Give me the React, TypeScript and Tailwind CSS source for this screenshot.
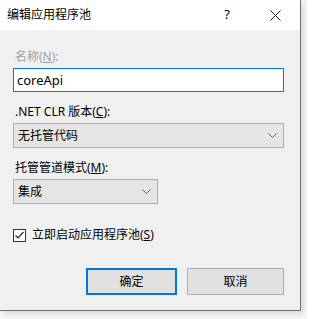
import React from "react";

const font = "font-['Noto_Sans','Noto_Sans_CJK_SC',sans-serif]";

function Chevron() {
  return (
    <svg width="9" height="6" viewBox="0 0 9 6" className="shrink-0">
      <path d="M0.5 0.5 L4.5 4.5 L8.5 0.5" fill="none" stroke="#606060" strokeWidth="1" />
    </svg>
  );
}

function Select({ value, width }: { value: string; width: string }) {
  return (
    <div
      className={`${width} h-[25px] flex items-center justify-between pl-[4px] pr-[6px] bg-[#e5e5e5] border border-[#acacac] text-[12px] text-black`}
    >
      <span>{value}</span>
      <Chevron />
    </div>
  );
}

export default function App() {
  const [checked, setChecked] = React.useState(true);

  return (
    <div className={`w-[307px] h-[319px] bg-[#f7f7f7] ${font}`}>
      <div className="w-[301px] h-[311px] flex flex-col bg-[#f0f0f0] border-r border-b border-[#707070] shadow-[3px_3px_6px_rgba(0,0,0,0.12)]">
        {/* Title bar */}
        <div className="h-[30px] shrink-0 flex items-center bg-white pl-[7px] text-[12px] text-black">
          <span className="flex-1">编辑应用程序池</span>
          <span className="w-[10px] text-center text-[13px] mr-[38px]">?</span>
          <svg width="11" height="11" viewBox="0 0 11 11" className="mr-[19px]">
            <path d="M0.5 0.5 L10.5 10.5 M10.5 0.5 L0.5 10.5" stroke="#111" strokeWidth="1" />
          </svg>
        </div>

        {/* Body */}
        <div className="flex flex-col pl-[13px] pr-[16px] pt-[19px] text-[12px] text-black">
          <label className="h-[16px] leading-[16px] pl-[2px] text-[#a0a0a0]">
            名称(<span className="underline">N</span>):
          </label>
          <input
            defaultValue="coreApi"
            className="mt-[3px] h-[24px] w-full px-[3px] bg-white border border-[#0078d7] text-[13px] outline-none"
          />

          <label className="mt-[12px] h-[16px] leading-[16px] pl-[2px]">
            .NET CLR 版本(<span className="underline">C</span>):
          </label>
          <div className="mt-[3px]">
            <Select value="无托管代码" width="w-full" />
          </div>

          <label className="mt-[12px] h-[16px] leading-[16px] pl-[2px]">
            托管管道模式(<span className="underline">M</span>):
          </label>
          <div className="mt-[3px]">
            <Select value="集成" width="w-[145px]" />
          </div>

          <label
            className="mt-[24px] h-[14px] flex items-center gap-[6px] cursor-default"
            onClick={() => setChecked(!checked)}
          >
            <span className="w-[13px] h-[13px] flex items-center justify-center bg-white border border-[#333]">
              {checked && (
                <svg width="11" height="11" viewBox="0 0 11 11">
                  <path d="M1.5 5.5 L4 8 L9.5 2" fill="none" stroke="#222" strokeWidth="1.2" />
                </svg>
              )}
            </span>
            <span>
              立即启动应用程序池(<span className="underline">S</span>)
            </span>
          </label>

          <div className="mt-[26px] flex justify-end gap-[10px]">
            <button className="w-[91px] h-[27px] bg-[#e1e1e1] border-2 border-[#0078d7] text-[12px]">
              确定
            </button>
            <button className="w-[97px] h-[27px] bg-[#e1e1e1] border border-[#adadad] text-[12px]">
              取消
            </button>
          </div>
        </div>
      </div>
    </div>
  );
}
